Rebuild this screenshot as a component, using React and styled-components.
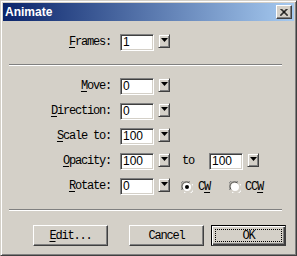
import * as React from 'react';
import styled, { createGlobalStyle } from 'styled-components';

const GlobalStyle = createGlobalStyle`
    html, body {
        margin: 0;
        padding: 0;
        background: #d4d0c8;
    }
`

const Window = styled.div`
    width: 297px;
    height: 256px;
    box-sizing: border-box;
    background: #d4d0c8;
    border-top: 1px solid #d4d0c8;
    border-left: 1px solid #d4d0c8;
    border-right: 1px solid #404040;
    border-bottom: 1px solid #404040;
    box-shadow: inset 1px 1px #ffffff, inset -1px -1px #808080;
    padding: 2px 2px 2px 2px;
    display: flex;
    flex-direction: column;
`

const TitleBar = styled.div`
    height: 18px;
    display: flex;
    align-items: center;
    justify-content: space-between;
    padding: 0 2px 0 2px;
    background: linear-gradient(to right, #0a246a, #a6caf0);
`

const TitleText = styled.span`
    color: #ffffff;
    font-family: "Liberation Sans", Arial, sans-serif;
    font-weight: bold;
    font-size: 12px;
`

const CloseButton = styled.div`
    width: 16px;
    height: 14px;
    box-sizing: border-box;
    background: #d4d0c8;
    border-top: 1px solid #ffffff;
    border-left: 1px solid #ffffff;
    border-right: 1px solid #404040;
    border-bottom: 1px solid #404040;
    box-shadow: inset -1px -1px #808080;
    display: flex;
    align-items: center;
    justify-content: center;
`

const Body = styled.div`
    display: flex;
    flex-direction: column;
    padding-top: 13px;
`

const Rows = styled.div`
    display: flex;
    flex-direction: column;
    gap: 8px;
`

const Row = styled.div`
    display: flex;
    align-items: flex-start;
    height: 17px;
`

const Label = styled.span`
    width: 108px;
    margin-right: 9px;
    text-align: right;
    line-height: 17px;
    font-family: "Liberation Mono", "Courier New", monospace;
    font-size: 12px;
    letter-spacing: -1.2px;
    color: #000;
    white-space: nowrap;
`

const Key = styled.span`
    text-decoration: underline;
    text-underline-offset: 2px;
`

const Field = styled.div`
    width: 34px;
    height: 17px;
    box-sizing: border-box;
    background: #ffffff;
    border-top: 1px solid #808080;
    border-left: 1px solid #808080;
    border-right: 1px solid #ffffff;
    border-bottom: 1px solid #ffffff;
    box-shadow: inset 1px 1px #404040, inset -1px -1px #d4d0c8;
    padding-left: 2px;
    font-family: "Liberation Sans", Arial, sans-serif;
    font-size: 12px;
    line-height: 15px;
    color: #000;
`

const DropButton = styled.div`
    width: 12px;
    height: 14px;
    margin-left: 4px;
    box-sizing: border-box;
    background: #d4d0c8;
    border-top: 1px solid #d4d0c8;
    border-left: 1px solid #d4d0c8;
    border-right: 1px solid #404040;
    border-bottom: 1px solid #404040;
    box-shadow: inset 1px 1px #ffffff, inset -1px -1px #808080;
    display: flex;
    align-items: center;
    justify-content: center;
    padding-bottom: 2px;
`

const ToText = styled.span`
    margin-left: 12px;
    margin-right: 15px;
    width: 12px;
    line-height: 17px;
    font-family: "Liberation Mono", "Courier New", monospace;
    font-size: 12px;
    letter-spacing: -1.2px;
`

const Radio = styled.label`
    display: flex;
    align-items: center;
    height: 17px;
    margin-left: ${p => p.$offset}px;
    gap: ${p => p.$gap}px;
    font-family: "Liberation Mono", "Courier New", monospace;
    font-size: 12px;
    letter-spacing: -1.2px;
`

const Separator = styled.div`
    width: 273px;
    height: 0;
    margin: ${p => p.$top}px 0 ${p => p.$bottom}px 6px;
    border-top: 1px solid #808080;
    border-bottom: 1px solid #ffffff;
`

const ButtonRow = styled.div`
    display: flex;
    padding-left: 30px;
`

const Button = styled.div`
    width: 75px;
    height: 21px;
    box-sizing: border-box;
    margin-left: ${p => p.$gap || 0}px;
    background: #d4d0c8;
    border: 1px solid ${p => p.$default ? '#000000' : '#d4d0c8'};
    border-top-color: ${p => p.$default ? '#000000' : '#ffffff'};
    border-left-color: ${p => p.$default ? '#000000' : '#ffffff'};
    border-right-color: #404040;
    border-bottom-color: #404040;
    box-shadow: ${p => p.$default
        ? 'inset 1px 1px #ffffff, inset -1px -1px #404040, inset -2px -2px #808080'
        : 'inset -1px -1px #808080'};
    display: flex;
    align-items: center;
    justify-content: center;
    font-family: "Liberation Mono", "Courier New", monospace;
    font-size: 12px;
    letter-spacing: -1.2px;
    color: #000;
    position: relative;
`

const FocusRing = styled.div`
    position: absolute;
    left: 3px;
    top: 3px;
    right: 3px;
    bottom: 3px;
    border: 1px dotted #000;
`

const Arrow = () => (
    <svg width="7" height="4" viewBox="0 0 7 4">
        <polygon points="0,0 7,0 3.5,4" fill="#000" />
    </svg>
)

const RadioDot = ({ checked }) => (
    <svg width="12" height="12" viewBox="0 0 12 12">
        <path d="M1 9 A5.5 5.5 0 0 1 9 1" stroke="#808080" fill="none" />
        <path d="M2.2 8.6 A4.5 4.5 0 0 1 8.6 2.2" stroke="#404040" fill="none" />
        <circle cx="6" cy="6" r="4" fill="#fff" />
        <path d="M3 11 A5.5 5.5 0 0 0 11 3" stroke="#fff" fill="none" />
        <path d="M3.4 9.8 A4.5 4.5 0 0 0 9.8 3.4" stroke="#d4d0c8" fill="none" />
        {checked && <circle cx="6" cy="6" r="2" fill="#000" />}
    </svg>
)

const SpinField = ({ value }) => (
    <>
        <Field>{value}</Field>
        <DropButton><Arrow /></DropButton>
    </>
)

const App = () => {
    return (
        <Window>
            <GlobalStyle />
            <TitleBar>
                <TitleText>Animate</TitleText>
                <CloseButton>
                    <svg width="8" height="7" viewBox="0 0 8 7">
                        <path d="M0.5 0 L7.5 7 M1.5 0 L8 6.5 M7.5 0 L0.5 7 M6.5 0 L0 6.5" stroke="#000" strokeWidth="1" />
                    </svg>
                </CloseButton>
            </TitleBar>
            <Body>
                <Row>
                    <Label><Key>F</Key>rames:</Label>
                    <SpinField value="1" />
                </Row>
                <Separator $top={13} $bottom={12} />
                <Rows>
                    <Row>
                        <Label><Key>M</Key>ove:</Label>
                        <SpinField value="0" />
                    </Row>
                    <Row>
                        <Label><Key>D</Key>irection:</Label>
                        <SpinField value="0" />
                    </Row>
                    <Row>
                        <Label><Key>S</Key>cale to:</Label>
                        <SpinField value="100" />
                    </Row>
                    <Row>
                        <Label><Key>O</Key>pacity:</Label>
                        <SpinField value="100" />
                        <ToText>to</ToText>
                        <SpinField value="100" />
                    </Row>
                    <Row>
                        <Label><Key>R</Key>otate:</Label>
                        <SpinField value="0" />
                        <Radio $offset={11} $gap={5}>
                            <RadioDot checked />
                            <span>C<Key>W</Key></span>
                        </Radio>
                        <Radio $offset={19} $gap={4}>
                            <RadioDot />
                            <span>CC<Key>W</Key></span>
                        </Radio>
                    </Row>
                </Rows>
                <Separator $top={14} $bottom={14} />
                <ButtonRow>
                    <Button><span><Key>E</Key>dit...</span></Button>
                    <Button $gap={21}>Cancel</Button>
                    <Button $gap={7} $default>OK<FocusRing /></Button>
                </ButtonRow>
            </Body>
        </Window>
    );
};

export default App;
